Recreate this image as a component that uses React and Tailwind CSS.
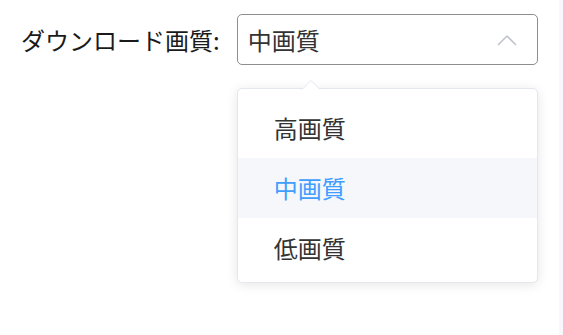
import React from "react";

const options = ["高画質", "中画質", "低画質"];

const App = () => {
  const selected = "中画質";

  return (
    <div
      className="relative h-[335px] w-[563px] overflow-hidden bg-white"
      style={{ fontFamily: '"Noto Sans CJK JP", "Noto Sans", sans-serif' }}
    >
      <div className="flex items-start pl-[21px] pt-[14px]">
        <label className="mt-[11px] text-[24px] leading-[30px] text-[#1a1a1a]">
          ダウンロード画質:
        </label>
        <div className="relative ml-[17px] w-[301px]">
          <div className="flex h-[51px] items-center justify-between rounded-[5px] border border-[#8e8e8e] pl-[10px] pr-[20px]">
            <span className="text-[24px] leading-none text-[#333333]">{selected}</span>
            <svg width="20" height="12" viewBox="0 0 20 12" fill="none">
              <polyline
                points="1,11 10,2 19,11"
                stroke="#c0c4cc"
                strokeWidth="1.6"
                strokeLinejoin="round"
              />
            </svg>
          </div>

          {/* dropdown */}
          <div className="absolute left-0 top-full mt-[23px] w-[301px] rounded-[5px] border border-[#e4e7ed] bg-white pb-[4px] pt-[9px] shadow-[0_2px_12px_0_rgba(0,0,0,0.1)]">
            <svg
              className="absolute left-[63px] top-[-10px]"
              width="20"
              height="11"
              viewBox="0 0 20 11"
            >
              <polygon points="1,10.5 10,1.5 19,10.5" fill="#ffffff" />
              <polyline points="1,10.5 10,1.5 19,10.5" fill="none" stroke="#e4e7ed" strokeWidth="1" />
            </svg>
            <ul>
              {options.map((o) => (
                <li
                  key={o}
                  className={
                    o === selected
                      ? "flex h-[60px] items-center bg-[#f5f7fa] pl-[36px] text-[24px] text-[#409eff]"
                      : "flex h-[60px] items-center pl-[36px] text-[24px] text-[#333333]"
                  }
                >
                  {o}
                </li>
              ))}
            </ul>
          </div>
        </div>
      </div>
      <div className="absolute right-0 top-0 h-full w-[4px] bg-[#f7f7fc]" />
    </div>
  );
};

export default App;
